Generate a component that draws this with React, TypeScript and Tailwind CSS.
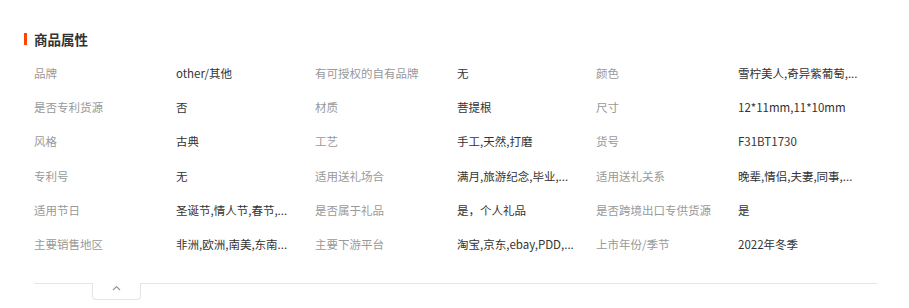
import React from "react";

const rows: [string, string][][] = [
  [["品牌", "other/其他"], ["有可授权的自有品牌", "无"], ["颜色", "雪柠美人,奇异紫葡萄,..."]],
  [["是否专利货源", "否"], ["材质", "菩提根"], ["尺寸", "12*11mm,11*10mm"]],
  [["风格", "古典"], ["工艺", "手工,天然,打磨"], ["货号", "F31BT1730"]],
  [["专利号", "无"], ["适用送礼场合", "满月,旅游纪念,毕业,..."], ["适用送礼关系", "晚辈,情侣,夫妻,同事,..."]],
  [["适用节日", "圣诞节,情人节,春节,..."], ["是否属于礼品", "是，个人礼品"], ["是否跨境出口专供货源", "是"]],
  [["主要销售地区", "非洲,欧洲,南美,东南..."], ["主要下游平台", "淘宝,京东,ebay,PDD,..."], ["上市年份/季节", "2022年冬季"]],
];

export default function App() {
  return (
    <div
      className="w-[909px] h-[308px] bg-white overflow-hidden"
      style={{ fontFamily: '"Noto Sans CJK SC", "Liberation Sans", sans-serif' }}
    >
      {/* Section title */}
      <div className="flex items-center h-[20px] mt-[29px] ml-[24px]">
        <span className="w-[3px] h-[12px] bg-[#ff4400]" />
        <h2 className="ml-[7px] text-[13.5px] leading-[20px] font-bold text-[#333]">商品属性</h2>
      </div>

      {/* Attribute grid */}
      <div className="mt-[7px] ml-[34px] w-[843px]">
        {rows.map((row, i) => (
          <div key={i} className="grid grid-cols-[142px_139px_142px_139px_142px_139px] h-[34.2px] items-center text-[11.5px] leading-[18px]">
            {row.map(([label, value]) => (
              <React.Fragment key={label}>
                <span className="text-[#999] whitespace-nowrap">{label}</span>
                <span className="text-[#333] whitespace-nowrap overflow-hidden">{value}</span>
              </React.Fragment>
            ))}
          </div>
        ))}
      </div>

      {/* Collapse bar */}
      <div className="mt-[22px] ml-[34px] w-[843px] flex items-start">
        <div className="w-[58px] border-t border-[#e5e5e5]" />
        <button className="w-[49px] h-[17px] border-x border-b border-[#e5e5e5] rounded-b-[4px] flex justify-center pt-[2px] bg-white">
          <svg width="9" height="6" viewBox="0 0 9 6" fill="none">
            <polyline points="1,5 4.5,1.5 8,5" stroke="#8f98a8" strokeWidth="1.2" />
          </svg>
        </button>
        <div className="flex-1 border-t border-[#e5e5e5]" />
      </div>
    </div>
  );
}
